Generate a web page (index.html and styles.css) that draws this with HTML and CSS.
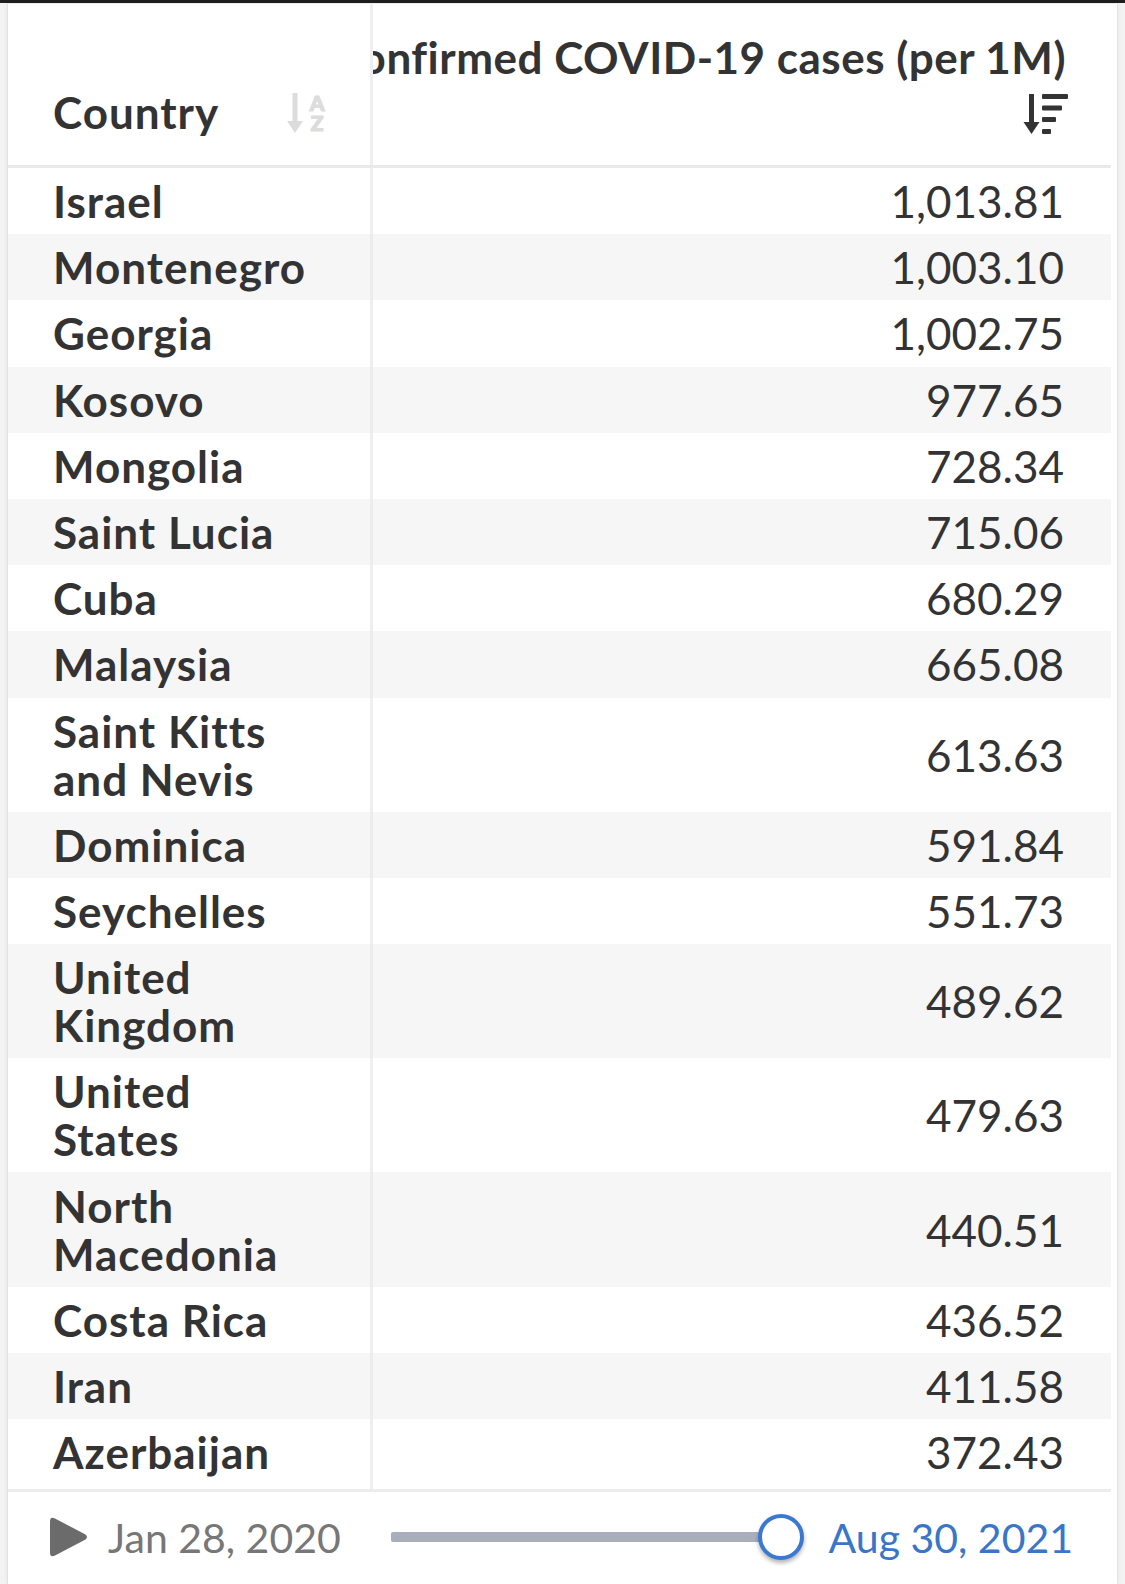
FILE: index.html
```html
<!DOCTYPE html>
<html>
<head>
<meta charset="utf-8">
<link rel="stylesheet" href="styles.css">
</head>
<body>
<div class="topbar"></div>
<div class="card">
  <div class="tbl">
    <div class="head">
      <div class="hc hc-country">
        <span class="htext">Country</span>
        <div class="ico-alpha">
          <svg viewBox="0 0 16 40" width="16" height="40">
            <rect x="5.5" y="0" width="5" height="30" fill="#dcdcdc"/>
            <polygon points="0,28 16,28 8,40" fill="#dcdcdc"/>
          </svg>
          <div class="az"><span>A</span><span>Z</span></div>
        </div>
      </div>
      <div class="hc hc-value">
        <div class="hline"><span class="htext2">Confirmed COVID-19 cases (per 1M)</span></div>
        <div class="hicon">
          <svg viewBox="0 0 45 40" width="45" height="40">
            <rect x="6" y="0" width="5" height="30" fill="#333"/>
            <polygon points="0.5,28 16.5,28 8.5,40" fill="#333"/>
            <rect x="19" y="0" width="26" height="5" rx="1" fill="#333"/>
            <rect x="19" y="11.5" width="20" height="5" rx="1" fill="#333"/>
            <rect x="19" y="23" width="14" height="5" rx="1" fill="#333"/>
            <rect x="19" y="35" width="9" height="5" rx="1" fill="#333"/>
          </svg>
        </div>
      </div>
    </div>
    <div class="row"><div class="c-name">Israel</div><div class="c-val">1,013.81</div></div>
    <div class="row alt"><div class="c-name">Montenegro</div><div class="c-val">1,003.10</div></div>
    <div class="row"><div class="c-name">Georgia</div><div class="c-val">1,002.75</div></div>
    <div class="row alt"><div class="c-name">Kosovo</div><div class="c-val">977.65</div></div>
    <div class="row"><div class="c-name">Mongolia</div><div class="c-val">728.34</div></div>
    <div class="row alt"><div class="c-name">Saint Lucia</div><div class="c-val">715.06</div></div>
    <div class="row"><div class="c-name">Cuba</div><div class="c-val">680.29</div></div>
    <div class="row alt"><div class="c-name">Malaysia</div><div class="c-val">665.08</div></div>
    <div class="row"><div class="c-name">Saint Kitts and Nevis</div><div class="c-val">613.63</div></div>
    <div class="row alt"><div class="c-name">Dominica</div><div class="c-val">591.84</div></div>
    <div class="row"><div class="c-name">Seychelles</div><div class="c-val">551.73</div></div>
    <div class="row alt"><div class="c-name">United Kingdom</div><div class="c-val">489.62</div></div>
    <div class="row"><div class="c-name">United States</div><div class="c-val">479.63</div></div>
    <div class="row alt"><div class="c-name">North Macedonia</div><div class="c-val">440.51</div></div>
    <div class="row"><div class="c-name">Costa Rica</div><div class="c-val">436.52</div></div>
    <div class="row alt"><div class="c-name">Iran</div><div class="c-val">411.58</div></div>
    <div class="row last"><div class="c-name">Azerbaijan</div><div class="c-val">372.43</div></div>
  </div>
  <div class="footer">
    <svg class="play" viewBox="0 0 38 40" width="38" height="40">
      <path d="M5 1.5 L35.5 17.5 Q38.5 20 35.5 22.5 L5 38.5 Q0 41 0 35.5 V4.5 Q0 -1 5 1.5 Z" fill="#6b6b6b"/>
    </svg>
    <span class="date-start">Jan 28, 2020</span>
    <div class="slider">
      <div class="track"></div>
      <div class="thumb"></div>
    </div>
    <span class="date-end">Aug 30, 2021</span>
  </div>
</div>
</body>
</html>
```
FILE: styles.css
```css
html, body {
  margin: 0;
  padding: 0;
  background: #f3f3f3;
}
body {
  font-family: Lato, "Noto Sans", sans-serif;
  color: #333;
  width: 1125px;
  height: 1584px;
  overflow: hidden;
}
.topbar {
  height: 3px;
  background: #1e1e1e;
}
.card {
  margin-left: 7px;
  width: 1111px;
  box-sizing: border-box;
  height: 1581px;
  background: #fff;
  border-left: 1px solid #e2e2e2;
  border-right: 1px solid #e4e4e4;
  border-top: 1px solid #ececec;
  box-shadow: 0 0 5px rgba(0, 0, 0, 0.06);
}
.tbl {
  width: 1103px;
}
.head {
  display: grid;
  grid-template-columns: 365px 1fr;
  height: 161px;
  border-bottom: 3px solid #e9e9e9;
}
.hc {
  box-sizing: border-box;
  font-size: 44px;
  font-weight: 700;
  line-height: 49px;
}
.hc-country {
  border-right: 3px solid #efefef;
  padding: 0 45px 28px 45px;
  display: flex;
  align-items: flex-end;
  justify-content: space-between;
}
.htext {
  letter-spacing: 1px;
}
.ico-alpha {
  display: flex;
  align-items: flex-start;
  gap: 6px;
  margin-bottom: 4px;
}
.ico-alpha svg {
  display: block;
}
.az {
  display: flex;
  flex-direction: column;
  font-size: 21px;
  line-height: 20px;
  font-weight: 900;
  color: #dcdcdc;
  -webkit-text-stroke: 1.2px #dcdcdc;
  text-align: center;
  width: 16px;
}
.hc-value {
  overflow: hidden;
  padding: 29px 45px 0 0;
}
.hline {
  display: flex;
  justify-content: flex-end;
}
.htext2 {
  white-space: nowrap;
  letter-spacing: 0.5px;
}
.hicon {
  display: flex;
  justify-content: flex-end;
  margin-top: 12px;
  margin-right: -2px;
}
.hicon svg {
  display: block;
}
.row {
  display: grid;
  grid-template-columns: 365px 1fr;
  font-size: 44px;
  line-height: 48px;
}
.row.alt {
  background: #f6f6f6;
}
.c-name {
  box-sizing: border-box;
  border-right: 3px solid #efefef;
  padding: 9.1px 58px 9.1px 45px;
  font-weight: 700;
  letter-spacing: 1px;
  display: flex;
  align-items: center;
}
.row.alt .c-name {
  border-right-color: #ececec;
}
.row.last .c-name,
.row.last .c-val {
  padding-bottom: 13px;
}
.c-val {
  padding: 9.1px 47px 9.1px 0;
  text-align: right;
  display: flex;
  align-items: center;
  justify-content: flex-end;
  font-weight: 400;
}
.footer {
  border-top: 3px solid #ececec;
  display: flex;
  align-items: center;
  height: 93px;
  padding: 0 38px 0 42px;
  width: 1103px;
  box-sizing: border-box;
}
.play {
  display: block;
  flex: none;
}
.date-start {
  margin-left: 20px;
  font-size: 41px;
  color: #777;
  white-space: nowrap;
}
.slider {
  position: relative;
  flex: 1;
  height: 48px;
  margin-left: 50px;
  display: flex;
  align-items: center;
}
.track {
  height: 10px;
  width: 100%;
  margin-right: 23px;
  background: #a9afba;
  border-radius: 2px;
}
.thumb {
  position: absolute;
  right: 0;
  top: 1px;
  width: 46px;
  height: 46px;
  box-sizing: border-box;
  border-radius: 50%;
  background: #fff;
  border: 4px solid #3b78d4;
  box-shadow: 0 3px 4px rgba(0, 0, 0, 0.3);
}
.date-end {
  margin-left: 25px;
  font-size: 41px;
  color: #3a76c8;
  white-space: nowrap;
}
```
